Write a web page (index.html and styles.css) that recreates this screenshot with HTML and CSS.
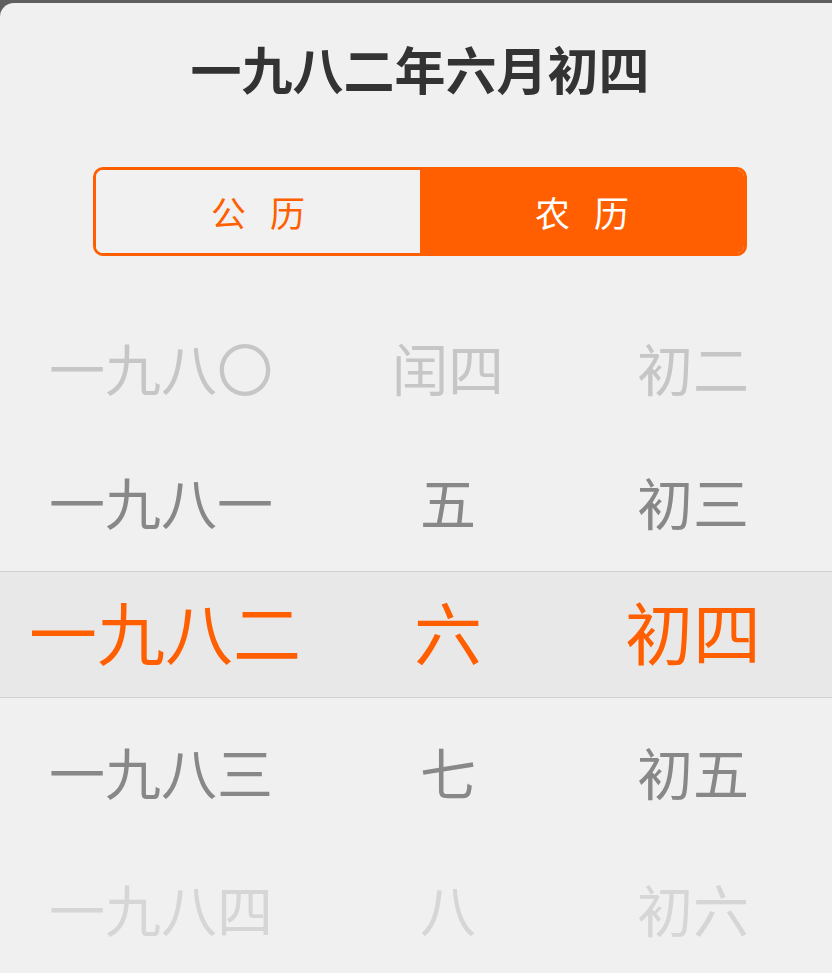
FILE: index.html
```html
<!DOCTYPE html>
<html lang="zh-CN">
<head>
<meta charset="utf-8">
<title>农历选择</title>
<link rel="stylesheet" href="styles.css">
</head>
<body>
<div class="strip"></div>
<div class="panel">
  <h1 class="title">一九八二年六月初四</h1>
  <div class="segment">
    <div class="seg-item">公 历</div>
    <div class="seg-item active">农 历</div>
  </div>
  <div class="picker">
    <div class="row row1">
      <div class="cell c1">一九八〇</div>
      <div class="cell c2">闰四</div>
      <div class="cell c3">初二</div>
    </div>
    <div class="row row2">
      <div class="cell c1">一九八一</div>
      <div class="cell c2">五</div>
      <div class="cell c3">初三</div>
    </div>
    <div class="row band">
      <div class="cell c1 sel1">一九八二</div>
      <div class="cell c2">六</div>
      <div class="cell c3">初四</div>
    </div>
    <div class="row row4">
      <div class="cell c1">一九八三</div>
      <div class="cell c2">七</div>
      <div class="cell c3">初五</div>
    </div>
    <div class="row row5">
      <div class="cell c1">一九八四</div>
      <div class="cell c2">八</div>
      <div class="cell c3">初六</div>
    </div>
  </div>
</div>
</body>
</html>
```
FILE: styles.css
```css
* { box-sizing: border-box; }
html, body { margin: 0; padding: 0; }
body {
  background: #5f5f5f;
  font-family: "Noto Sans CJK SC", "Noto Sans", sans-serif;
  width: 832px;
  height: 973px;
  overflow: hidden;
}
.strip { height: 3px; }
.panel {
  background: #f0f0f0;
  border-top-left-radius: 14px;
  height: 970px;
  overflow: hidden;
}
.title {
  margin: 0;
  padding-top: 40px;
  padding-left: 8px;
  height: 95px;
  line-height: 50px;
  font-size: 51px;
  font-weight: 700;
  color: #333333;
  text-align: center;
}
.segment {
  margin: 69px 0 0 93px;
  width: 654px;
  height: 89px;
  border: 3px solid #ff5f00;
  border-radius: 10px;
  overflow: hidden;
  display: flex;
}
.seg-item {
  flex: 1;
  display: flex;
  align-items: center;
  justify-content: center;
  font-size: 35px;
  letter-spacing: 8px;
  padding-left: 8px;
  color: #ff5f00;
  background: #f1f1f1;
}
.seg-item.active {
  background: #ff5f00;
  color: #ffffff;
}
.picker { margin-top: 48px; }
.row {
  display: flex;
  align-items: center;
  font-size: 56px;
  padding-bottom: 9px;
}
.cell { text-align: center; white-space: nowrap; }
.c1 { width: 322px; }
.c2 { width: 252px; }
.c3 { width: 238px; }
.sel1 { padding-left: 8px; }
.row1 { height: 134px; color: #c6c6c6; }
.row2 { height: 133px; color: #888888; }
.band {
  height: 127px;
  background: #e8e8e8;
  border-top: 1px solid #d2d2d2;
  border-bottom: 1px solid #d2d2d2;
  color: #ff5f00;
  font-size: 68px;
}
.row4 { height: 154px; color: #888888; }
.row5 { height: 120px; color: #d6d6d6; }
```
